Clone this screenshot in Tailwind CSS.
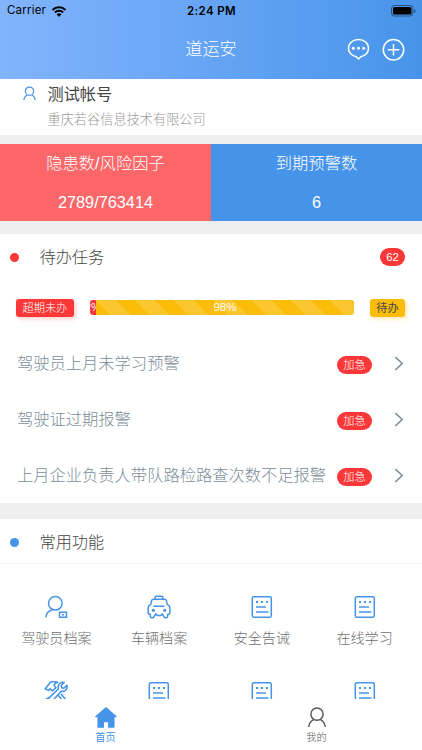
<!DOCTYPE html>
<html lang="zh-CN">
<head>
<meta charset="utf-8">
<meta name="viewport" content="width=device-width, initial-scale=1">
<title>道运安</title>
<script src="https://cdn.jsdelivr.net/npm/@tailwindcss/browser@4"></script>
</head>
<body class="font-['Liberation_Sans','Noto_Sans_CJK_SC',sans-serif] font-light bg-white">
<svg class="hidden">
  <symbol id="doc" viewBox="0 0 24 24" fill="none" stroke="currentColor" stroke-width="1.5">
    <rect x="2.300" y="1.700" width="19" height="20.600" rx="1.600"/>
    <path d="M6 12h10M6 17h12.500"/>
    <path d="M6 7h2M11 7h2M16 7h2" stroke-width="2"/>
  </symbol>
  <symbol id="person" viewBox="0 0 20 22" fill="none" stroke="currentColor">
    <circle cx="10" cy="7.500" r="6.400"/>
    <path d="M1.300 21c.4-3.600 2.200-6.200 5-7.700M18.700 21c-.4-3.600-2.200-6.200-5-7.700"/>
  </symbol>
  <symbol id="chevron" viewBox="0 0 10 16" fill="none" stroke="currentColor" stroke-width="1.600">
    <path d="M1.200 1.200 8.400 8l-7.200 6.800"/>
  </symbol>
</svg>
<div class="flex h-[750px] w-[422px] flex-col overflow-hidden">
  <header class="h-[79px] shrink-0 bg-linear-to-r from-[#82b4fd] to-[#4694ea]">
    <div class="grid h-[22px] grid-cols-3 items-center pl-[7px] pr-[6px] font-[Inter] text-[11.5px] text-black">
      <div class="flex items-center gap-[5px] font-normal tracking-[0.2px]">Carrier
        <svg class="h-[11px] w-[16px]" viewBox="0 0 16 12" fill="none" stroke="#000" stroke-width="2.200"><path d="M.9 4.300a10.200 10.200 0 0 1 14.200 0M3.500 7.100a6.400 6.400 0 0 1 9 0"/><path d="m8 12-2.500-2.800a3.600 3.600 0 0 1 5 0Z" fill="#000" stroke="none"/></svg>
      </div>
      <div class="pt-px text-center font-semibold tracking-[0.4px]">2:24 PM</div>
      <svg class="h-[12px] w-[25px] justify-self-end" viewBox="0 0 25 12"><rect x=".5" y=".5" width="21.500" height="10.500" rx="3" fill="none" stroke="#000" stroke-opacity=".45"/><rect x="2" y="2" width="18.500" height="7.500" rx="1.600"/><path d="M23.300 4v4c1.600-.6 1.600-3.400 0-4Z" fill-opacity=".5"/></svg>
    </div>
    <div class="grid h-[54px] grid-cols-3 items-center pr-[17px] text-white">
      <div></div>
      <h1 class="pl-[17px] pt-[2px] text-center text-[17.200px] font-light">道运安</h1>
      <div class="flex items-center justify-end gap-[12px]">
        <svg class="h-[23px] w-[23px]" viewBox="0 0 23 23" fill="none" stroke="#fff" stroke-width="1.500"><path d="M11.500 1.500c5.600 0 10 3.800 10 8.700 0 4.300-3.300 7.700-7.700 8.500l-2.300 2.300-2.300-2.300c-4.400-.8-7.700-4.200-7.700-8.500 0-4.900 4.400-8.700 10-8.700Z"/><g fill="#fff" stroke="none"><circle cx="6.300" cy="10.300" r="1.500"/><circle cx="11.500" cy="10.300" r="1.500"/><circle cx="16.700" cy="10.300" r="1.500"/></g></svg>
        <svg class="h-[23px] w-[23px]" viewBox="0 0 23 23" fill="none" stroke="#fff" stroke-width="1.500"><circle cx="11.500" cy="11.800" r="10.200"/><path d="M5.700 11.800h11.600M11.500 6v11.600"/></svg>
      </div>
    </div>
  </header>

  <section class="flex h-[56px] shrink-0 pl-[23px]">
    <svg class="mt-[7px] h-[15px] w-[13px] text-[#4694ea] stroke-[1.900]"><use href="#person"/></svg>
    <div class="pl-[11.500px]">
      <div class="mt-[3px] h-[24px] text-[16.200px] leading-[24px] font-normal text-[#444]">测试帐号</div>
      <div class="mt-[4px] text-[13.200px] leading-[20px] text-[#999]">重庆若谷信息技术有限公司</div>
    </div>
  </section>

  <section class="grid h-[99px] shrink-0 grid-cols-2 border-t-[9px] border-b-[13px] border-[#efefef] text-center text-[16.300px] leading-[24px] text-white">
    <div class="bg-[#fb6769] pt-[7px]"><div>隐患数/风险因子</div><div class="mt-[15px]">2789/763414</div></div>
    <div class="bg-[#4694ea] pt-[7px]"><div>到期预警数</div><div class="mt-[15px]">6</div></div>
  </section>

  <section class="h-[269px] shrink-0 text-[16.270px] text-[#7b8d99]">
    <div class="flex h-[46px] items-center pl-[10px] pr-[17px]">
      <span class="size-[9px] rounded-full bg-[#fb3738]"></span>
      <h2 class="ml-[20.500px] flex-1 pt-px text-[16.200px] font-light text-[#444]">待办任务</h2>
      <span class="h-[18px] w-[25px] rounded-full bg-[#fb3738] text-center text-[11.300px] leading-[18px] text-white">62</span>
    </div>
    <div class="flex h-[55px] items-center pl-[16px] pr-[17px] text-[11.200px]">
      <span class="h-[18px] w-[58px] rounded-[3px] bg-[#fb3738] text-center leading-[18px] text-white shadow-[2px_2px_4px_#fb373840]">超期未办</span>
      <div class="ml-[16px] flex h-[15px] w-[265px] overflow-hidden rounded-[3px] text-white leading-[15px]">
        <div class="flex w-[6px] justify-center overflow-hidden bg-[#fb3738]">2%</div>
        <div class="flex-1 bg-[#fbbc0a] bg-[linear-gradient(45deg,#ffffff26_25%,transparent_25%,transparent_50%,#ffffff26_50%,#ffffff26_75%,transparent_75%)] bg-[length:39px_39px] text-center text-[11.500px]">98%</div>
      </div>
      <span class="ml-[16px] h-[18px] w-[35px] rounded-[3px] bg-[#fbbc0a] text-center leading-[18px] font-normal text-[#444] shadow-[2px_2px_4px_#fbbc0a50]">待办</span>
    </div>
    <div class="flex h-[56px] items-center pl-[17px] pr-[18px]"><span class="flex-1">驾驶员上月未学习预警</span><span class="mt-[4px] h-[18px] w-[35px] rounded-full bg-[#fb3738] text-center text-[11.200px] leading-[18px] text-white">加急</span><svg class="ml-[22px] h-[15px] w-[10px]"><use href="#chevron"/></svg></div>
    <div class="flex h-[56px] items-center pl-[17px] pr-[18px]"><span class="flex-1">驾驶证过期报警</span><span class="mt-[4px] h-[18px] w-[35px] rounded-full bg-[#fb3738] text-center text-[11.200px] leading-[18px] text-white">加急</span><svg class="ml-[22px] h-[15px] w-[10px]"><use href="#chevron"/></svg></div>
    <div class="flex h-[56px] items-center pl-[17px] pr-[18px]"><span class="flex-1 whitespace-nowrap">上月企业负责人带队路检路查次数不足报警</span><span class="mt-[4px] h-[18px] w-[35px] rounded-full bg-[#fb3738] text-center text-[11.200px] leading-[18px] text-white">加急</span><svg class="ml-[22px] h-[15px] w-[10px]"><use href="#chevron"/></svg></div>
  </section>

  <section class="flex h-[196px] shrink-0 flex-col overflow-hidden border-t-[16px] border-[#efefef]">
    <div class="flex h-[45px] shrink-0 items-center border-b border-[#f4f4f4] pl-[10px] pt-[2px]">
      <span class="size-[9px] rounded-full bg-[#4694ea]"></span>
      <h2 class="ml-[20.500px] text-[16.200px] font-light text-[#444]">常用功能</h2>
    </div>
    <div class="grid shrink-0 grid-cols-4 pl-[5px] pr-[6px] pt-[31px] text-center text-[14.100px] text-[#707070]">
      <div class="flex h-[86px] flex-col items-center">
        <svg class="size-[24px] text-[#4694ea]" viewBox="0 0 24 24" fill="none" stroke="currentColor" stroke-width="1.500"><circle cx="11.300" cy="8.300" r="6.800"/><path d="M1.800 22.500c.2-4.200 2.700-6.700 6.800-8M15.500 17.300h7v5h-7zM18 19.800h2"/></svg>
        <span class="mt-[9px] leading-[20px]">驾驶员档案</span>
      </div>
      <div class="flex h-[86px] flex-col items-center">
        <svg class="size-[24px] text-[#4694ea]" viewBox="0 0 24 24" fill="none" stroke="currentColor" stroke-width="1.500" stroke-linejoin="round"><path d="M8.200 3.800V2.300c0-.7.400-1 1-1h5.600c.6 0 1 .3 1 1v1.500M6.300 4.200h11.400c1 0 1.500.5 1.700 1.400l.9 4c1.600.5 2.500 1.600 2.500 3.200v5.200c0 .8-.4 1.200-1.200 1.200h-.9v2c0 1-.6 1.500-1.500 1.500h-1.600l-2.300-3.900-1.600 1.600h-3.400l-1.600-1.600-2.300 3.900H4.800c-.9 0-1.500-.5-1.500-1.500v-2h-.9c-.8 0-1.200-.4-1.200-1.200v-5.200c0-1.600.9-2.700 2.500-3.200l.9-4c.2-.9.7-1.400 1.700-1.400ZM6.500 11.200h11"/><circle cx="6.300" cy="15.300" r=".9" fill="currentColor"/><circle cx="17.700" cy="15.300" r=".9" fill="currentColor"/></svg>
        <span class="mt-[9px] leading-[20px]">车辆档案</span>
      </div>
      <div class="flex h-[86px] flex-col items-center"><svg class="size-[24px] text-[#4694ea]"><use href="#doc"/></svg><span class="mt-[9px] leading-[20px]">安全告诫</span></div>
      <div class="flex h-[86px] flex-col items-center"><svg class="size-[24px] text-[#4694ea]"><use href="#doc"/></svg><span class="mt-[9px] leading-[20px]">在线学习</span></div>
      <div class="flex justify-center">
        <svg class="size-[24px] text-[#4694ea]" viewBox="0 0 24 24" fill="none" stroke="currentColor" stroke-width="1.600" stroke-linejoin="round"><path d="M1.200 7.800 5.800 2.100c1.600-1.800 4.500-2 7.700-.7-2.500.6-3.500 1.600-3.200 3.200l1.600 2.100-3.700 3.300-2-2.300-1.700 1.700ZM20.200 1.500l-3 3 .5 2.200 2.200.5 3-3c1 3.700-1.800 7-5.700 6l-9.500 10.600c-2 2.200-5.600-.8-3.500-3L14.500 7.700c-1.200-3.900 1.800-7.300 5.700-6.200ZM14.500 14.500l6 7.500M17 13l5.500 6.500M2 18.500l3-2"/></svg>
      </div>
      <div class="flex justify-center"><svg class="size-[24px] text-[#4694ea]"><use href="#doc"/></svg></div>
      <div class="flex justify-center"><svg class="size-[24px] text-[#4694ea]"><use href="#doc"/></svg></div>
      <div class="flex justify-center"><svg class="size-[24px] text-[#4694ea]"><use href="#doc"/></svg></div>
    </div>
  </section>

  <nav class="grid h-[51px] shrink-0 grid-cols-2 bg-white text-center text-[10.200px] leading-[14px]">
    <div class="flex flex-col items-center pt-[8px] text-[#4694ea]">
      <svg class="h-[21px] w-[22px]" viewBox="0 0 22 21" fill="currentColor"><path d="M11 0 22 9.500l-1 1-1.400-.8v9.800c0 .8-.5 1.300-1.300 1.300h-5.200v-5.600H9v5.600H3.700c-.8 0-1.300-.5-1.300-1.300V9.700L1 10.500l-1-1Z"/></svg>
      <span class="mt-[3px] font-normal">首页</span>
    </div>
    <div class="flex flex-col items-center pt-[8px] text-[#555]">
      <svg class="h-[21px] w-[20px] stroke-[1.500]"><use href="#person"/></svg>
      <span class="mt-[3px]">我的</span>
    </div>
  </nav>
</div>
</body>
</html>
